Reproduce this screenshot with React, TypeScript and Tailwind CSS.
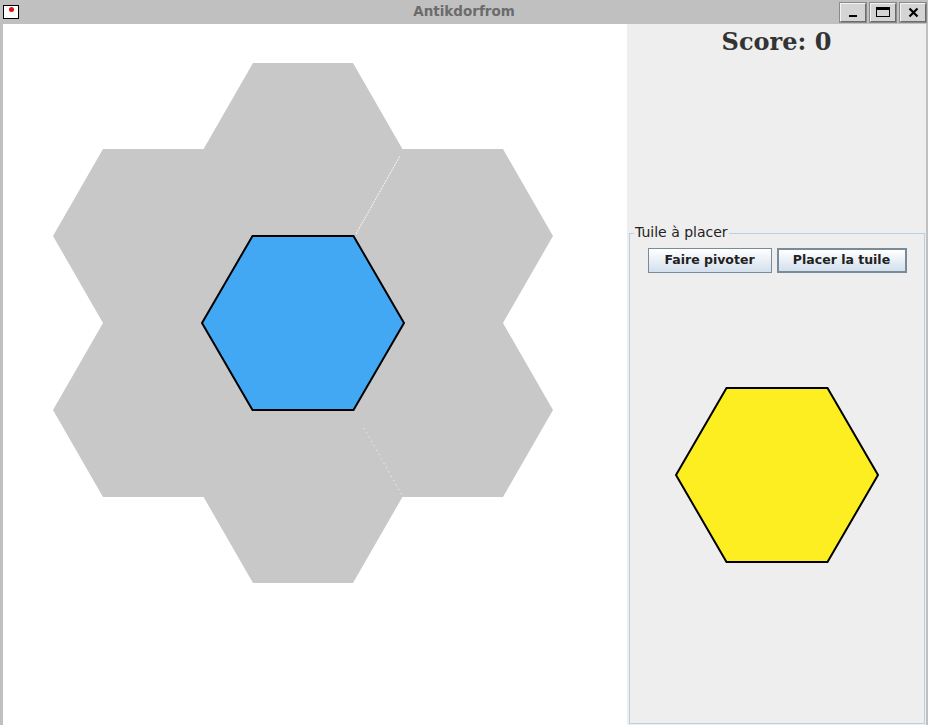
import React from 'react';

const R = 101;
const H = 87;

function hexPoints(cx: number, cy: number, r: number = R) {
    return [
        [cx - r, cy],
        [cx - r / 2, cy - H],
        [cx + r / 2, cy - H],
        [cx + r, cy],
        [cx + r / 2, cy + H],
        [cx - r / 2, cy + H],
    ]
        .map((p) => p.join(','))
        .join(' ');
}

const grayTiles = [
    [303, 150],
    [153, 236],
    [453, 236],
    [153, 410],
    [453, 410],
    [303, 496],
];

function TitleButton({ children }: { children: React.ReactNode }) {
    return (
        <div className="flex h-[19px] w-[26px] items-center justify-center border border-t-[#f4f4f4] border-l-[#f4f4f4] border-r-[#6a6a6a] border-b-[#6a6a6a] bg-[#d4d4d4] outline outline-1 outline-[#8a8a8a]">
            {children}
        </div>
    );
}

export default function App() {
    return (
        <div
            className="flex h-[725px] w-[928px] flex-col overflow-hidden bg-[#c0c0c0]"
            style={{ fontFamily: '"DejaVu Sans", sans-serif' }}
        >
            {/* title bar */}
            <div className="relative flex h-[24px] items-center justify-between">
                <div className="ml-[3px] flex h-[14px] w-[16px] items-start justify-center border-[1.5px] border-black bg-white">
                    <div className="mt-[1px] h-[5px] w-[5px] rounded-full bg-[#e01010]" />
                </div>
                <div className="absolute inset-x-0 top-[3px] text-center text-[13.5px] font-bold leading-[17px] text-[#6b6b6b]">
                    Antikdorfrom
                </div>
                <div className="relative mr-[2px] flex gap-[4px]">
                    <TitleButton>
                        <div className="mt-[8px] h-[2px] w-[8px] bg-black" />
                    </TitleButton>
                    <TitleButton>
                        <div className="h-[10px] w-[14px] border border-t-[3px] border-black" />
                    </TitleButton>
                    <TitleButton>
                        <svg width="11" height="11" viewBox="0 0 11 11">
                            <path d="M1.5 1.5 L9.5 9.5 M9.5 1.5 L1.5 9.5" stroke="black" strokeWidth="2.2" />
                        </svg>
                    </TitleButton>
                </div>
            </div>

            {/* body */}
            <div className="flex flex-1">
                <div className="w-[3px]" />
                <div className="w-[624px] bg-white">
                    <svg width="624" height="701" viewBox="3 24 624 701">
                        {grayTiles.map(([x, y], i) => (
                            <polygon key={i} points={hexPoints(x, y, 100)} fill="#c8c8c8" />
                        ))}
                        <line x1="356" y1="234" x2="400" y2="156" stroke="white" strokeWidth="1" strokeDasharray="2 1" opacity="0.9" />
                        <line x1="364" y1="428" x2="402" y2="495" stroke="white" strokeWidth="1" strokeDasharray="1 4" opacity="0.9" />
                        <polygon points={hexPoints(303, 323)} fill="#42a8f4" stroke="black" strokeWidth="2" />
                    </svg>
                </div>
                <div className="flex w-[299px] flex-col bg-[#eeeeee]">
                    <div
                        className="pt-[4px] text-center text-[24px] font-bold leading-[28px] text-[#333333]"
                        style={{ fontFamily: '"DejaVu Serif", serif' }}
                    >
                        Score: 0
                    </div>
                    <div className="relative mt-[177px] ml-[2px] mr-[1px] flex flex-1 flex-col items-center border border-[#b8cfe5] mb-[1px]">
                        <span className="absolute -top-[10px] left-[4px] bg-[#eeeeee] px-[1px] text-[14px] leading-[17px] text-[#222222]">
                            Tuile à placer
                        </span>
                        <div className="mt-[14px] flex gap-[5px]">
                            <button className="h-[25px] w-[124px] border border-[#7a8a99] bg-gradient-to-b from-white to-[#d3e0ee] text-[12.5px] font-bold text-[#222222]">
                                Faire pivoter
                            </button>
                            <button className="h-[25px] w-[130px] border-2 border-[#7a8a99] bg-gradient-to-b from-white to-[#d3e0ee] text-[12.5px] font-bold text-[#222222]">
                                Placer la tuile
                            </button>
                        </div>
                        <svg className="mt-[112px]" width="206" height="180" viewBox="674 385 206 180">
                            <polygon points={hexPoints(777, 475)} fill="#fdee21" stroke="black" strokeWidth="2" />
                        </svg>
                    </div>
                </div>
                <div className="w-[2px]" />
            </div>
        </div>
    );
}
